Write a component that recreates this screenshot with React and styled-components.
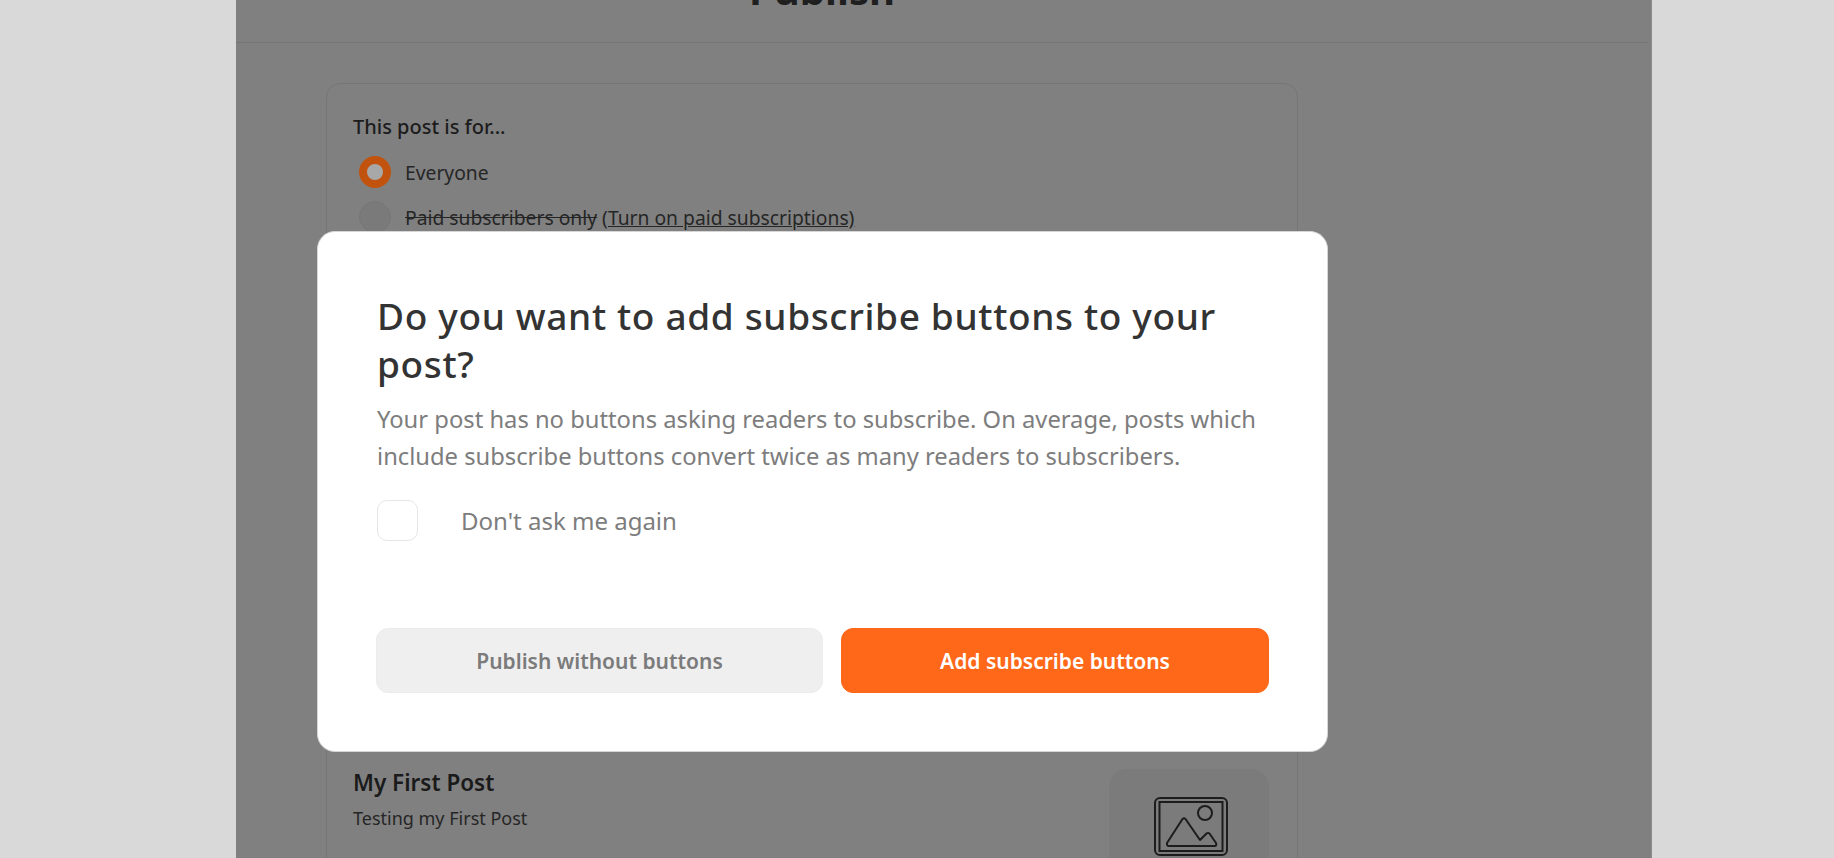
import React from "react";
import styled, { createGlobalStyle } from "styled-components";

const Global = createGlobalStyle`
  html, body { margin: 0; padding: 0; height: 100%; overflow: hidden; background: #d9d9d9; }
  body { font-family: "Noto Sans", "Open Sans", sans-serif; }
  * { box-sizing: border-box; }
`;

const Shell = styled.div`
  height: 858px;
  padding: 0 182px 0 236px;
  background: #d9d9d9;
`;

const Column = styled.main`
  position: relative;
  height: 858px;
  overflow: hidden;
  background: #808080;
  border-right: 1px solid #8c8c8c;
`;

const Header = styled.header`
  height: 43px;
  margin-right: 3px;
  padding-right: 240px;
  border-bottom: 1px solid #757575;
  display: flex;
  justify-content: center;
  align-items: flex-end;
  overflow: hidden;
`;

const PageTitle = styled.h1`
  margin: 0 0 26px 0;
  font-size: 40px;
  line-height: 52px;
  font-weight: 700;
  color: #1f1f1f;
`;

const Card = styled.section`
  width: 972px;
  height: 800px;
  margin: 40px 0 0 90px;
  padding: 30px 26px 0;
  border: 1px solid #757575;
  border-radius: 14px;
`;

const Legend = styled.div`
  font-size: 20px;
  line-height: 26px;
  font-weight: 500;
  color: #1c1c1c;
  margin-bottom: 16px;
`;

const RadioRow = styled.div`
  display: flex;
  align-items: center;
  gap: 14px;
  height: 32px;
  margin: 0 0 13px 6px;
  font-size: 19.3px;
  color: #262626;
`;

const Radio = styled.span`
  width: 32px;
  height: 32px;
  flex: none;
  border-radius: 50%;
  background: ${(p) => (p.$on ? "#a8a8a8" : "#7a7a7a")};
  border: ${(p) => (p.$on ? "8px solid #c2530f" : "1px solid #777")};
`;

const Struck = styled.span`
  text-decoration: line-through;
`;

const Underlined = styled.span`
  text-decoration: underline;
  margin-left: 5px;
`;

const Post = styled.div`
  display: flex;
  justify-content: space-between;
  margin-top: 536px;
  margin-right: 2px;
`;

const PostText = styled.div`
  padding-top: 0;
`;

const PostTitle = styled.div`
  font-size: 22.5px;
  line-height: 28px;
  font-weight: 600;
  color: #1a1a1a;
  margin-bottom: 8px;
`;

const PostSub = styled.div`
  font-size: 18px;
  line-height: 26px;
  color: #262626;
`;

const Thumb = styled.div`
  width: 160px;
  height: 160px;
  margin-top: 0;
  padding: 28px 0 0 4px;
  display: flex;
  justify-content: center;
  align-items: flex-start;
  border-radius: 18px;
  background: #7b7b7b;
`;

const Dialog = styled.div`
  position: absolute;
  left: 81px;
  top: 231px;
  width: 1011px;
  height: 521px;
  padding: 60px 58px 0 59px;
  background: #fff;
  border-radius: 18px;
  border: 1px solid #d6d6d6;
  display: flex;
  flex-direction: column;
`;

const DialogTitle = styled.h2`
  margin: 0;
  font-size: 37px;
  line-height: 48px;
  font-weight: 500;
  letter-spacing: 0.65px;
  color: #333;
`;

const DialogBody = styled.p`
  margin: 13px 0 0;
  font-size: 23.75px;
  line-height: 37px;
  color: #7d7d7d;
`;

const CheckRow = styled.label`
  display: flex;
  align-items: center;
  gap: 43px;
  margin-top: 25px;
  font-size: 24px;
  color: #7d7d7d;
`;

const CheckBox = styled.span`
  width: 41px;
  height: 41px;
  flex: none;
  border: 1px solid #e6e6e6;
  border-radius: 10px;
  background: #fff;
`;

const Actions = styled.div`
  display: grid;
  grid-template-columns: 447px 428px;
  gap: 18px;
  margin: 87px 0 0 -1px;
`;

const ActionButton = styled.button`
  height: 65px;
  border-radius: 12px;
  font-family: inherit;
  font-size: 21px;
  font-weight: 600;
  cursor: pointer;
  border: 1px solid ${(p) => (p.$primary ? "#ff6719" : "#ececec")};
  background: ${(p) => (p.$primary ? "#ff6719" : "#efefef")};
  color: ${(p) => (p.$primary ? "#fff" : "#7b7b7b")};
`;

const ImageIcon = () => (
  <svg width="74" height="60" viewBox="0 0 74 60" fill="none" stroke="#1c1c1c" strokeWidth="2">
    <rect x="1" y="1" width="72" height="57" rx="5" />
    <rect x="5.5" y="5" width="63" height="49" />
    <circle cx="51" cy="16" r="7" />
    <path d="M13 46 L28.5 22 Q30 20.5 31.5 22 L46 43 L52.5 36.5 Q54 35.5 55.5 36.5 L62 46 Q63 49 60.5 49 L15 49 Q12.5 49 13 46 Z" strokeLinejoin="round" />
  </svg>
);

export default function App() {
  return (
    <Shell>
      <Global />
      <Column>
        <Header>
          <PageTitle>Publish</PageTitle>
        </Header>
        <Card>
          <Legend>This post is for...</Legend>
          <RadioRow>
            <Radio $on />
            Everyone
          </RadioRow>
          <RadioRow>
            <Radio />
            <span>
              <Struck>Paid subscribers only</Struck>
              <Underlined>(Turn on paid subscriptions)</Underlined>
            </span>
          </RadioRow>
          <Post>
            <PostText>
              <PostTitle>My First Post</PostTitle>
              <PostSub>Testing my First Post</PostSub>
            </PostText>
            <Thumb>
              <ImageIcon />
            </Thumb>
          </Post>
        </Card>
        <Dialog>
          <DialogTitle>Do you want to add subscribe buttons to your post?</DialogTitle>
          <DialogBody>
            Your post has no buttons asking readers to subscribe. On average, posts which include subscribe buttons convert twice as many readers to subscribers.
          </DialogBody>
          <CheckRow>
            <CheckBox />
            Don't ask me again
          </CheckRow>
          <Actions>
            <ActionButton>Publish without buttons</ActionButton>
            <ActionButton $primary>Add subscribe buttons</ActionButton>
          </Actions>
        </Dialog>
      </Column>
    </Shell>
  );
}
